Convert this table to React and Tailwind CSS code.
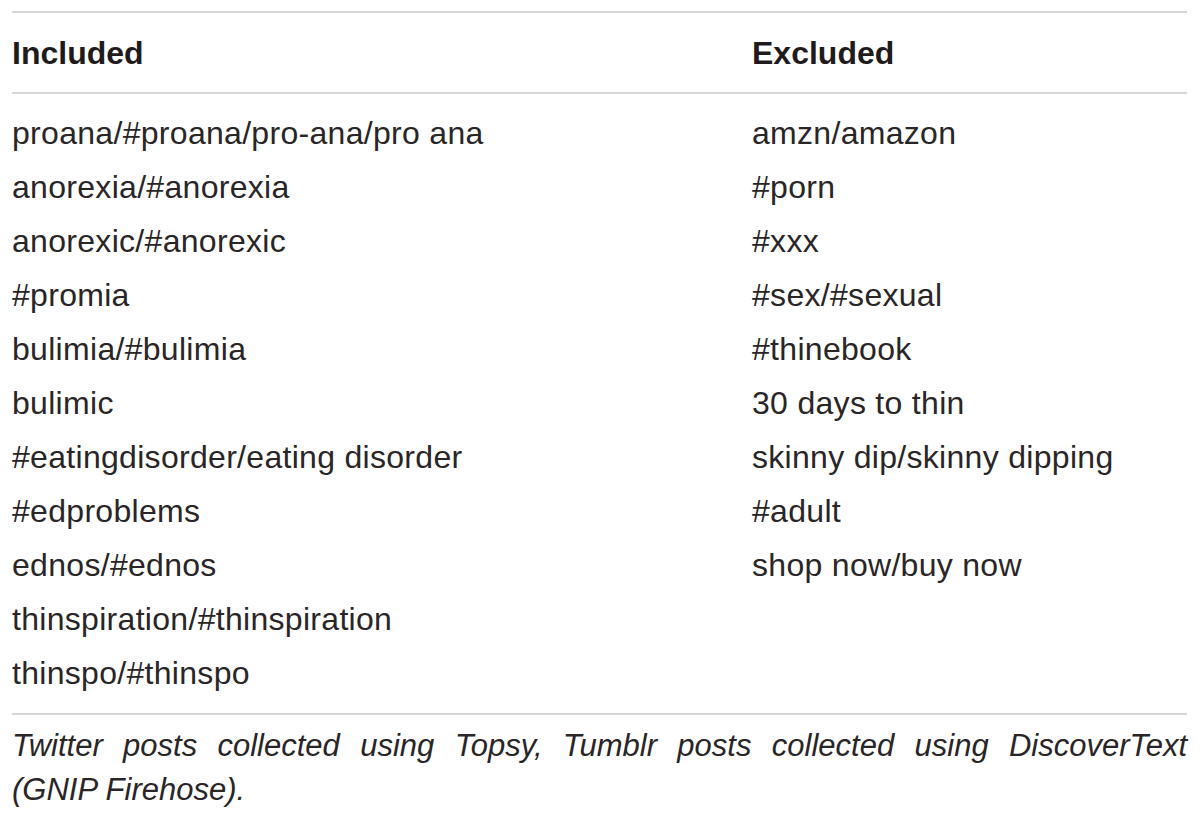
import React from "react";

const included = [
  "proana/#proana/pro-ana/pro ana",
  "anorexia/#anorexia",
  "anorexic/#anorexic",
  "#promia",
  "bulimia/#bulimia",
  "bulimic",
  "#eatingdisorder/eating disorder",
  "#edproblems",
  "ednos/#ednos",
  "thinspiration/#thinspiration",
  "thinspo/#thinspo",
];

const excluded = [
  "amzn/amazon",
  "#porn",
  "#xxx",
  "#sex/#sexual",
  "#thinebook",
  "30 days to thin",
  "skinny dip/skinny dipping",
  "#adult",
  "shop now/buy now",
];

const App = () => {
  return (
    <div
      className="min-h-screen bg-white text-[#2a2627] pl-[12px] pt-[11px]"
      style={{ fontFamily: '"Liberation Sans", Arial, sans-serif' }}
    >
      <div className="w-[1175px]">
        {/* Header */}
        <div className="border-t-2 border-b-2 border-[#d6d6d6] grid grid-cols-[740px_1fr] h-[83px] items-center">
          <div className="text-[32px] font-bold text-[#1f1b1c]">Included</div>
          <div className="text-[32px] font-bold text-[#1f1b1c]">Excluded</div>
        </div>

        {/* Body */}
        <div className="grid grid-cols-[740px_1fr] pt-[12px] pb-[13px] border-b-2 border-[#d6d6d6]">
          <div>
            {included.map((t) => (
              <div key={t} className="h-[54px] flex items-center text-[32px] tracking-[0.3px]">
                {t}
              </div>
            ))}
          </div>
          <div>
            {excluded.map((t) => (
              <div key={t} className="h-[54px] flex items-center text-[32px] tracking-[0.3px]">
                {t}
              </div>
            ))}
          </div>
        </div>

        {/* Footnote */}
        <div className="italic text-[31px] leading-[44px] pt-[9px]">
          <p className="text-justify [text-align-last:justify]">
            Twitter posts collected using Topsy, Tumblr posts collected using DiscoverText
          </p>
          <p>(GNIP Firehose).</p>
        </div>
      </div>
    </div>
  );
};

export default App;
